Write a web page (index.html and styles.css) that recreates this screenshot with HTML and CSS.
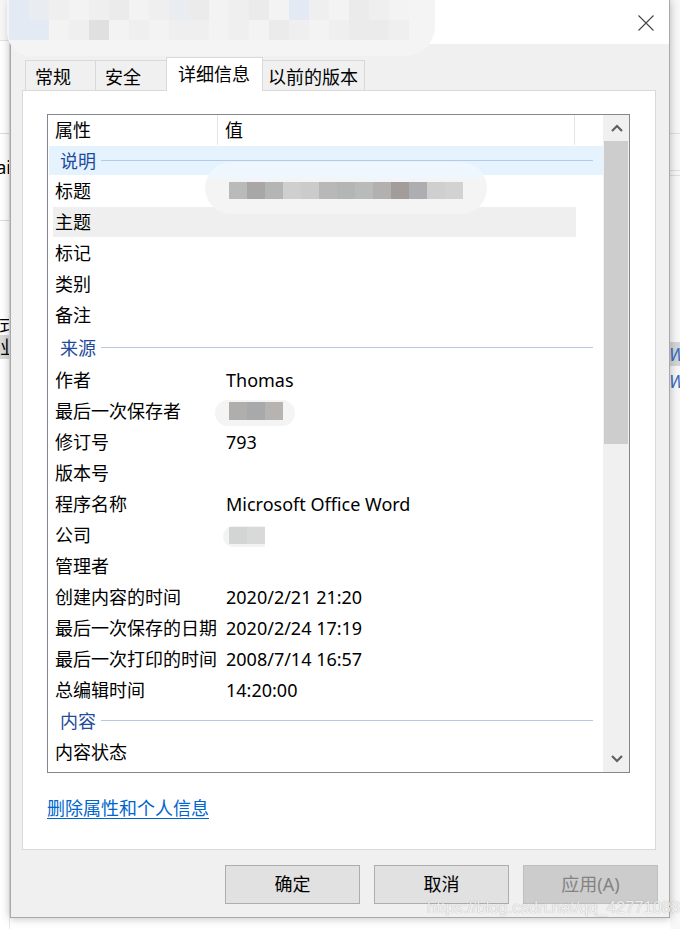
FILE: index.html
```html
<!DOCTYPE html>
<html lang="zh-CN">
<head>
<meta charset="utf-8">
<title>属性</title>
<link rel="stylesheet" href="styles.css">
</head>
<body>
<div class="screen">
  <div class="bg-left">
    <div class="bgl-a"></div>
    <div class="bgl-b"></div>
    <div class="bgl-c"><span class="clip-r">ai</span></div>
    <div class="bgl-d"></div>
    <div class="bgl-e"><span class="clip-r">式</span></div>
    <div class="bgl-f"><span class="clip-r">业</span></div>
    <div class="bgl-g"></div>
  </div>

  <div class="dialog">
    <div class="titlebar">
      <div class="title-blur">
        <div class="tb-row">
          <i class="c1"></i><i class="c2"></i><i class="c3"></i><i class="c4"></i><i class="c3"></i><i class="c5"></i><i class="c4"></i><i class="c3"></i><i class="c2"></i><i class="c5"></i><i class="c4"></i><i class="c3"></i><i class="c5"></i><i class="c4"></i><i class="c1"></i><i class="c3"></i><i class="c4"></i><i class="c5"></i><i class="c3"></i><i class="c4"></i>
        </div>
        <div class="tb-row">
          <i class="c1"></i><i class="c1"></i><i class="c4"></i><i class="c3"></i><i class="c6"></i><i class="c4"></i><i class="c3"></i><i class="c4"></i><i class="c3"></i><i class="c3"></i><i class="c4"></i><i class="c3"></i><i class="c4"></i><i class="c5"></i><i class="c3"></i><i class="c4"></i><i class="c3"></i><i class="c5"></i><i class="c5"></i><i class="c3"></i>
        </div>
      </div>
      <div class="close">
        <svg width="16" height="16" viewBox="0 0 16 16"><path d="M0.5 0.5 L15.5 15.5 M15.5 0.5 L0.5 15.5" stroke="#444" stroke-width="1.1" fill="none"/></svg>
      </div>
    </div>

    <div class="dlg-body">
      <div class="tabs">
        <div class="tab t1">常规</div>
        <div class="tab t2">安全</div>
        <div class="tab t3 sel">详细信息</div>
        <div class="tab t4">以前的版本</div>
      </div>

      <div class="panel">
        <div class="listbox">
          <div class="list-main">
            <div class="list-head">
              <div class="hc name">属性</div>
              <div class="hc val">值</div>
              <div class="hc rest"></div>
            </div>
            <div class="grp sel-grp"><span class="gt">说明</span><span class="gl"></span></div>
            <div class="row"><div class="n">标题</div><div class="v">
              <span class="blur big">
                <i class="k1"></i><i class="k2"></i><i class="k3"></i><i class="k4"></i><i class="k5"></i><i class="k6"></i><i class="k3"></i><i class="k1"></i><i class="k7"></i><i class="k8"></i><i class="k9"></i><i class="k4"></i><i class="k10"></i>
              </span>
            </div></div>
            <div class="row hover"><div class="n">主题</div><div class="v"></div></div>
            <div class="row"><div class="n">标记</div><div class="v"></div></div>
            <div class="row"><div class="n">类别</div><div class="v"></div></div>
            <div class="row"><div class="n">备注</div><div class="v"></div></div>
            <div class="grp tall"><span class="gt">来源</span><span class="gl"></span></div>
            <div class="row"><div class="n">作者</div><div class="v">Thomas</div></div>
            <div class="row"><div class="n">最后一次保存者</div><div class="v">
              <span class="blur small"><i class="m1"></i><i class="m2"></i><i class="m3"></i></span>
            </div></div>
            <div class="row"><div class="n">修订号</div><div class="v">793</div></div>
            <div class="row"><div class="n">版本号</div><div class="v"></div></div>
            <div class="row"><div class="n">程序名称</div><div class="v">Microsoft Office Word</div></div>
            <div class="row"><div class="n">公司</div><div class="v">
              <span class="blur tiny"><i class="p1"></i><i class="p2"></i></span>
            </div></div>
            <div class="row"><div class="n">管理者</div><div class="v"></div></div>
            <div class="row"><div class="n">创建内容的时间</div><div class="v">2020/2/21 21:20</div></div>
            <div class="row"><div class="n">最后一次保存的日期</div><div class="v">2020/2/24 17:19</div></div>
            <div class="row"><div class="n">最后一次打印的时间</div><div class="v">2008/7/14 16:57</div></div>
            <div class="row"><div class="n">总编辑时间</div><div class="v">14:20:00</div></div>
            <div class="grp"><span class="gt">内容</span><span class="gl"></span></div>
            <div class="row"><div class="n">内容状态</div><div class="v"></div></div>
          </div>
          <div class="scrollbar">
            <div class="sb-btn">
              <svg width="12" height="8" viewBox="0 0 12 8"><path d="M1 7 L6 2 L11 7" stroke="#606060" stroke-width="2.2" fill="none"/></svg>
            </div>
            <div class="sb-thumb"></div>
            <div class="sb-track"></div>
            <div class="sb-btn">
              <svg width="12" height="8" viewBox="0 0 12 8"><path d="M1 1 L6 6 L11 1" stroke="#606060" stroke-width="2.2" fill="none"/></svg>
            </div>
          </div>
        </div>
        <a class="link" href="#">删除属性和个人信息</a>
      </div>

      <div class="buttons">
        <div class="btn">确定</div>
        <div class="btn">取消</div>
        <div class="btn disabled">应用(A)</div>
      </div>
    </div>
  </div>

  <div class="bg-right">
    <div class="bgr-a"></div>
    <div class="bgr-b"></div>
    <div class="bgr-c"></div>
    <div class="bgr-d"></div>
    <div class="bgr-e"><span class="wl">W</span></div>
    <div class="bgr-f"><span class="wl">W</span></div>
    <div class="bgr-g"></div>
  </div>

  <div class="watermark">https://blog.csdn.net/qq_42771083</div>
</div>
</body>
</html>
```

FILE: styles.css
```css
* { box-sizing: border-box; }
html, body { margin: 0; padding: 0; }
body {
  width: 680px;
  height: 929px;
  overflow: hidden;
  background: #ffffff;
  font-family: "Noto Sans", "Noto Sans CJK SC", sans-serif;
  font-size: 18px;
  color: #000;
}
.screen {
  position: relative;
  display: flex;
  width: 680px;
  height: 929px;
}

/* ---------- background windows ---------- */
.bg-left, .bg-right {
  width: 10px;
  display: flex;
  flex-direction: column;
  background: #fff;
  overflow: hidden;
}
.bg-left { border-right: 1px solid #e6e6e6; }
.bgl-a { height: 41px; border-bottom: 1px solid #e2e2e2; background: #f7f7f7; }
.bgl-b { height: 93px; border-bottom: 1px solid #dcdcdc; }
.bgl-c { height: 87px; border-bottom: 1px solid #dcdcdc; display: flex; align-items: center; justify-content: flex-end; padding-bottom: 20px; }
.bgl-d { height: 92px; }
.bgl-e { height: 22px; display: flex; justify-content: flex-end; align-items: center; }
.bgl-f { height: 24px; background: #d9d9d9; display: flex; justify-content: flex-end; align-items: center; }
.bgl-g { flex: 1; }
.clip-r { font-size: 18px; line-height: 20px; white-space: nowrap; margin-right: -2px; }
.bgl-f .clip-r { margin-right: -9px; }
.bgl-e .clip-r { margin-right: -8px; }

.bg-right { background: #f8f8f8; }
.bgr-a { height: 134px; border-bottom: 1px solid #e0e0e0; }
.bgr-b { height: 37px; border-bottom: 1px solid #e0e0e0; }
.bgr-c { height: 5px; border-bottom: 1px solid #e0e0e0; }
.bgr-d { height: 166px; }
.bgr-e { height: 24px; background: #d6d6d6; display: flex; align-items: center; }
.bgr-f { height: 30px; display: flex; align-items: center; }
.bgr-g { flex: 1; }
.wl { color: #3a6cc4; font-style: italic; font-size: 18px; line-height: 20px; margin-left: -1px; }

/* ---------- dialog ---------- */
.dialog {
  width: 660px;
  height: 918px;
  background: #f0f0f0;
  border: 1px solid #a9a9a9;
  border-top: 0;
  box-shadow: 0 0 9px rgba(0,0,0,0.28);
  display: flex;
  flex-direction: column;
  position: relative;
  z-index: 2;
}
.titlebar {
  height: 44px;
  background: #ffffff;
  position: relative;
  display: flex;
  justify-content: flex-end;
  align-items: center;
  padding-right: 15px;
}
.close { width: 16px; height: 16px; display: flex; margin-top: 1px; }

.title-blur {
  position: absolute;
  left: -4px;
  top: 0;
  width: 428px;
  height: 56px;
  background: #f4f4f4;
  border-radius: 0 0 30px 24px;
  z-index: 3;
  padding: 0 0 0 2px;
  display: flex;
  flex-direction: column;
}
.tb-row { display: flex; height: 20px; }
.tb-row i { width: 20px; height: 20px; display: block; }
.c1 { background: #e3eaf4; }
.c2 { background: #e9edf2; }
.c3 { background: #efefef; }
.c4 { background: #f3f3f3; }
.c5 { background: #ebebeb; }
.c6 { background: #e0e0e0; }

.dlg-body {
  flex: 1;
  display: flex;
  flex-direction: column;
  padding: 13px 13px 0 11px;
}

/* tabs */
.tabs {
  height: 33px;
  display: flex;
  align-items: flex-end;
  padding-left: 3px;
}
.tab {
  height: 30px;
  border: 1px solid #d9d9d9;
  border-bottom: 0;
  background: #f0f0f0;
  line-height: 32px;
  font-size: 18px;
  white-space: nowrap;
  margin-left: -1px;
}
.t1 { width: 71px; padding-left: 9px; margin-left: 0; }
.t2 { width: 72px; padding-left: 9px; }
.t3 { width: 97px; padding-left: 11px; }
.t4 { width: 103px; padding-left: 5px; }
.tab.sel {
  height: 34px;
  background: #fff;
  margin-bottom: -1px;
  position: relative;
  z-index: 1;
  line-height: 33px;
  border-color: #d9d9d9;
}

/* panel */
.panel {
  height: 760px;
  background: #fff;
  border: 1px solid #d9d9d9;
  padding: 23px 0 0 24px;
  display: flex;
  flex-direction: column;
  align-items: flex-start;
}

.listbox {
  width: 583px;
  height: 659px;
  border: 1px solid #828790;
  display: flex;
  overflow: hidden;
}
.list-main {
  width: 555px;
  display: flex;
  flex-direction: column;
}
.list-head {
  height: 31px;
  display: flex;
  flex: none;
}
.hc { line-height: 31px; height: 30px; }
.hc.name { width: 170px; padding-left: 7px; border-right: 1px solid #e5e5e5; }
.hc.val { width: 357px; padding-left: 7px; border-right: 1px solid #e5e5e5; }
.hc.rest { flex: 1; }

.grp {
  height: 31px;
  flex: none;
  display: flex;
  align-items: center;
  padding: 0 10px 0 12px;
  color: #1f4b9a;
}
.grp.sel-grp { height: 29px; background: #e5f3ff; margin-left: 1px; padding-left: 11px; }
.grp.tall { height: 34px; padding-top: 1px; }
.gt { line-height: 20px; }
.gl { flex: 1; height: 1px; background: #b8c9e6; margin-left: 5px; }

.row {
  height: 31px;
  flex: none;
  display: flex;
  align-items: center;
}
.row.hover {
  background: linear-gradient(#efefef, #efefef) 5px 1px / 523px 30px no-repeat;
}
.row .n { width: 170px; padding-left: 7px; white-space: nowrap; line-height: 20px; }
.row .v { flex: 1; padding-left: 8px; white-space: nowrap; line-height: 20px; font-size: 18px; display: flex; align-items: center; }

/* blurred values */
.blur { display: inline-flex; position: relative; z-index: 2; }
.blur i { display: block; width: 18px; height: 17px; }
.blur.big {
  padding: 20px 24px 15px 24px;
  margin: -20px 0 -15px -21px;
  border-radius: 28px;
  background: linear-gradient(to bottom, #eef6fe 0, #eef6fe 17px, #f4f4f4 17px);
}
.k1 { background: #b9baba; }
.k2 { background: #a9a6a6; }
.k3 { background: #b4b5b5; }
.k4 { background: #cfcfcf; }
.k5 { background: #cbcbcb; }
.k6 { background: #b8b8b8; }
.k7 { background: #b2b1b0; }
.k8 { background: #a29d9a; }
.k9 { background: #aeaeb2; }
.k10 { background: #d2d2d2; }
.blur.small {
  padding: 2px 12px 6px 14px;
  margin: -2px 0 -6px -11px;
  border-radius: 14px;
  background: #f4f4f4;
}
.blur.small i { height: 18px; }
.m1 { background: #b0aeac; }
.m2 { background: #a7a9ab; }
.m3 { background: #b6b3b0; }
.blur.tiny {
  padding: 1px 0 3px 6px;
  margin: 1px 0 -3px -3px;
  border-radius: 12px 0 0 12px;
  background: #f3f3f3;
}
.p1 { background: #d3d4d4; }
.p2 { background: #d9d9d9; }

/* scrollbar */
.scrollbar {
  width: 26px;
  display: flex;
  flex-direction: column;
  background: #f0f0f0;
  border-left: 1px solid #f0f0f0;
}
.sb-btn { height: 26px; display: flex; align-items: center; justify-content: center; flex: none; }
.sb-thumb { height: 303px; background: #cdcdcd; flex: none; margin-right: 1px; }
.sb-track { flex: 1; }

.link {
  margin-top: 24px;
  color: #0066cc;
  text-decoration: underline;
  text-underline-offset: 3px;
  line-height: 22px;
  font-size: 18px;
  margin-left: 0;
}

/* buttons */
.buttons {
  display: flex;
  justify-content: flex-end;
  gap: 14px;
  margin-top: 15px;
  margin-right: -2px;
}
.btn {
  width: 135px;
  height: 39px;
  background: #e1e1e1;
  border: 1px solid #adadad;
  text-align: center;
  line-height: 37px;
  font-size: 18px;
}
.btn.disabled {
  background: #cccccc;
  border-color: #bfbfbf;
  color: #838383;
}

.watermark {
  position: absolute;
  left: 427px;
  top: 898px;
  z-index: 5;
  font-family: "Liberation Sans", Arial, sans-serif;
  font-size: 16.5px;
  color: rgba(255,255,255,0.85);
  text-shadow: 0 0 1px rgba(0,0,0,0.35);
  white-space: nowrap;
}
```
